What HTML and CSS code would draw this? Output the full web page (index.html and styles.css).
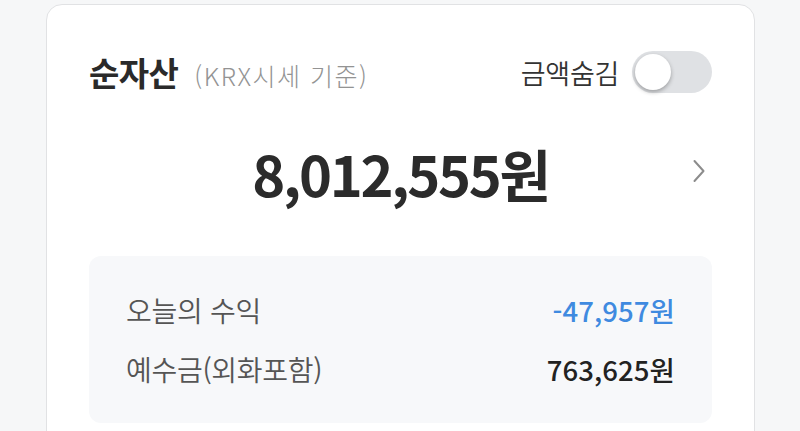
FILE: index.html
```html
<!DOCTYPE html>
<html lang="ko">
<head>
<meta charset="utf-8">
<link rel="stylesheet" href="styles.css">
</head>
<body>
<div class="card">
  <div class="head">
    <div class="title"><span class="t-main">순자산</span><span class="t-sub">(KRX시세 기준)</span></div>
    <div class="hide">
      <span class="hide-label">금액숨김</span>
      <span class="toggle"><span class="knob"></span></span>
    </div>
  </div>
  <div class="total">
    <span class="amount">8,012,555원</span>
    <svg class="chev" width="14" height="26" viewBox="0 0 14 26"><path d="M2.5 3 L11.5 13 L2.5 23" fill="none" stroke="#8c8c8c" stroke-width="2" stroke-linecap="round" stroke-linejoin="round"/></svg>
  </div>
  <div class="box">
    <div class="row"><span class="lbl">오늘의 수익</span><span class="val neg">-47,957원</span></div>
    <div class="row"><span class="lbl">예수금(외화포함)</span><span class="val">763,625원</span></div>
  </div>
</div>
</body>
</html>
```
FILE: styles.css
```css
html, body { margin: 0; padding: 0; }
body {
  background: #f6f7f8;
  width: 800px;
  height: 431px;
  overflow: hidden;
  font-family: "Noto Sans CJK KR", "Noto Sans", sans-serif;
}
.card {
  margin: 4px 0 0 46px;
  width: 709px;
  height: 480px;
  background: #fff;
  border: 1px solid #e1e2e4;
  border-radius: 16px;
  box-sizing: border-box;
  padding: 0 42px;
}
.head {
  display: flex;
  justify-content: space-between;
  align-items: center;
  height: 46px;
  margin-top: 44px;
}
.title { display: flex; align-items: baseline; }
.t-main { font-size: 33px; font-weight: 700; color: #2a2a2a; letter-spacing: -0.6px; }
.t-sub { font-size: 25px; font-weight: 300; color: #939393; margin-left: 16px; letter-spacing: 1.5px; }
.hide { display: flex; align-items: center; }
.hide-label { font-size: 27px; font-weight: 350; color: #333; margin-right: 13px; letter-spacing: -0.3px; }
.toggle {
  width: 80px;
  height: 42px;
  border-radius: 21px;
  background: #dfe1e4;
  display: flex;
  align-items: center;
  padding: 0 3px;
  box-sizing: border-box;
}
.knob {
  width: 36px;
  height: 36px;
  border-radius: 50%;
  background: #fff;
  box-shadow: 0 2px 4px rgba(0,0,0,0.3);
}
.total {
  display: flex;
  align-items: center;
  justify-content: center;
  position: relative;
  height: 70px;
  margin-top: 42px;
}
.amount { font-size: 56px; font-weight: 700; color: #2b2b2b; letter-spacing: -2.3px; }
.chev { position: absolute; right: 6px; top: 21px; }
.box {
  margin-top: 49px;
  background: #f7f8fa;
  border-radius: 12px;
  padding: 38px 37px;
  display: flex;
  flex-direction: column;
  gap: 27px;
}
.row { display: flex; justify-content: space-between; align-items: center; height: 32px; }
.lbl { font-size: 28px; font-weight: 350; color: #555; letter-spacing: -0.3px; }
.val { font-size: 27.5px; font-weight: 450; color: #222; letter-spacing: 0.1px; }
.val.neg { color: #3f8ae0; }
```
